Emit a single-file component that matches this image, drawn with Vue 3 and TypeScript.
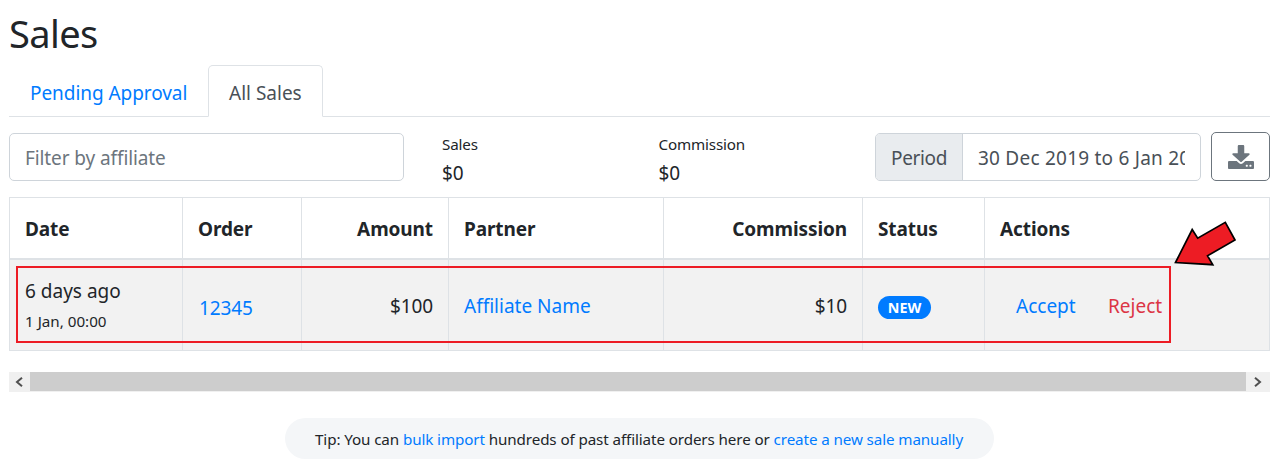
<script setup lang="ts">
import { ref } from 'vue'

const activeTab = ref('All Sales')
const tabs = ['Pending Approval', 'All Sales']
const filter = ref('')
const period = '30 Dec 2019 to 6 Jan 2020'
const stats = [
  { label: 'Sales', value: '$0' },
  { label: 'Commission', value: '$0' },
]
</script>

<template>
  <main class="page">
    <h1 class="title">Sales</h1>

    <nav class="tabs">
      <a
        v-for="tab in tabs"
        :key="tab"
        class="tab"
        :class="{ active: tab === activeTab }"
        @click="activeTab = tab"
      >{{ tab }}</a>
    </nav>

    <section class="toolbar">
      <input v-model="filter" class="filter" type="text" placeholder="Filter by affiliate" />
      <div v-for="stat in stats" :key="stat.label" class="stat">
        <div class="stat-label">{{ stat.label }}</div>
        <div class="stat-value">{{ stat.value }}</div>
      </div>
      <div class="period">
        <span class="period-label">Period</span>
        <div class="period-value"><span>{{ period }}</span></div>
      </div>
      <button class="download" aria-label="Download">
        <svg viewBox="0 0 512 512" preserveAspectRatio="none" width="26" height="24">
          <path fill="currentColor" d="M216 0h80c13.3 0 24 10.7 24 24v152h87.7c17.8 0 26.7 21.5 14.1 34.1L269.7 358.3c-7.5 7.5-19.8 7.5-27.3 0L90.1 210.1c-12.6-12.6-3.7-34.1 14.1-34.1H192V24c0-13.3 10.7-24 24-24zm296 366v122c0 13.3-10.7 24-24 24H24c-13.3 0-24-10.7-24-24V366c0-13.3 10.7-24 24-24h146.7l49 49c20.1 20.1 52.5 20.1 72.6 0l49-49H488c13.3 0 24 10.7 24 24zm-120 76c0-13-10-23-22-23s-22 10-22 23 10 23 22 23 22-10 22-23zm72 0c0-13-10-23-22-23s-22 10-22 23 10 23 22 23 22-10 22-23z" />
        </svg>
      </button>
    </section>

    <section class="table-wrap">
      <div class="row head">
        <div class="cell">Date</div>
        <div class="cell">Order</div>
        <div class="cell right">Amount</div>
        <div class="cell">Partner</div>
        <div class="cell right">Commission</div>
        <div class="cell">Status</div>
        <div class="cell">Actions</div>
      </div>
      <div class="row body">
        <div class="cell date">
          <span class="ago">6 days ago</span>
          <span class="exact">1 Jan, 00:00</span>
        </div>
        <div class="cell"><a class="order">12345</a></div>
        <div class="cell right"><span>$100</span></div>
        <div class="cell"><a class="partner">Affiliate Name</a></div>
        <div class="cell right"><span>$10</span></div>
        <div class="cell"><span class="badge">NEW</span></div>
        <div class="cell actions">
          <a class="accept">Accept</a>
          <a class="reject">Reject</a>
        </div>
      </div>
      <div class="highlight"></div>
      <svg class="arrow" viewBox="0 0 66 50" width="66" height="50">
        <path d="M4.5 43.5L21.2 10.5L26.7 19.2L54.3 3.3L64 21L36.5 36.8L41.8 45.7Z" fill="#ed1c24" stroke="#000" stroke-width="1.7" />
      </svg>
    </section>

    <div class="scrollbar">
      <span class="scroll-end">
        <svg width="8" height="10" viewBox="0 0 8 10"><path d="M7 0.8L2 5L7 9.2" /></svg>
      </span>
      <span class="thumb"></span>
      <span class="scroll-end last">
        <svg width="8" height="10" viewBox="0 0 8 10"><path d="M1 0.8L6 5L1 9.2" /></svg>
      </span>
    </div>

    <div class="tip">
      <p>Tip: You can <a>bulk import</a> hundreds of past affiliate orders here or <a>create a new sale manually</a></p>
    </div>
  </main>
</template>

<style>
body {
  margin: 0;
  background: #fff;
}
</style>

<style scoped>
* {
  box-sizing: border-box;
}
.page {
  width: 1278px;
  height: 467px;
  padding: 0 8px 0 9px;
  overflow: hidden;
  color: #212529;
  font: 19px/30px "Noto Sans", "Open Sans", sans-serif;
  white-space: nowrap;
}
a {
  color: #007bff;
  cursor: pointer;
}
.title {
  margin: 0;
  height: 65px;
  padding-top: 10px;
  font-size: 38px;
  line-height: 47px;
  font-weight: 400;
  letter-spacing: -0.6px;
}
.tabs {
  display: flex;
  height: 52px;
  border-bottom: 1px solid #dee2e6;
}
.tab {
  height: 52px;
  padding: 12px 20px;
  border: 1px solid transparent;
  border-radius: 5px 5px 0 0;
}
.tab:first-child {
  width: 199px;
  letter-spacing: -0.06px;
}
.tab:last-child {
  width: 115px;
}
.tab.active {
  color: #495057;
  background: #fff;
  border-color: #dee2e6 #dee2e6 #fff;
}
.toolbar {
  display: flex;
  height: 80px;
  padding-top: 16px;
}
.filter {
  width: 395px;
  height: 48px;
  margin-right: 38px;
  padding: 2px 15px 0;
  border: 1px solid #ced4da;
  border-radius: 5px;
  color: #495057;
  font: inherit;
  letter-spacing: -0.1px;
  outline: 0;
}
.filter::placeholder {
  color: #6c757d;
  opacity: 1;
}
.stat {
  width: 216.5px;
}
.stat-label {
  height: 24px;
  font-size: 15.2px;
  line-height: 23px;
  letter-spacing: -0.16px;
}
.stat-value {
  line-height: 32px;
  letter-spacing: -0.2px;
}
.period {
  display: flex;
  width: 326px;
  height: 48px;
  border: 1px solid #ced4da;
  border-radius: 5px;
  color: #495057;
  line-height: 48px;
  overflow: hidden;
}
.period-label {
  width: 87px;
  padding-left: 15px;
  background: #e9ecef;
  border-right: 1px solid #ced4da;
  letter-spacing: -0.35px;
}
.period-value {
  flex: 1;
  padding: 0 15px;
  min-width: 0;
  letter-spacing: 0.23px;
}
.period-value span {
  display: block;
  overflow: hidden;
}
.download {
  display: flex;
  align-items: center;
  justify-content: center;
  width: 59px;
  height: 49px;
  margin: -1px 0 0 10px;
  padding: 0;
  background: #fff;
  border: 1px solid #6c757d;
  border-radius: 5px;
  color: #6c757d;
}
.table-wrap {
  position: relative;
  height: 154px;
}
.row {
  display: grid;
  grid-template-columns: 173px 119px 147px 215px 199px 122px 286px;
}
.cell {
  display: flex;
  align-items: center;
  padding: 0 15px;
  border-left: 1px solid #dee2e6;
}
.cell:last-child {
  border-right: 1px solid #dee2e6;
}
.cell.right {
  justify-content: flex-end;
}
.head {
  height: 63px;
  border-top: 1px solid #dee2e6;
  border-bottom: 2px solid #dee2e6;
  font-weight: 700;
  letter-spacing: -0.1px;
}
.head .cell {
  padding-top: 2px;
}
.body {
  height: 91px;
  background: #f2f2f2;
  border-bottom: 1px solid #dee2e6;
}
.body .cell {
  padding-top: 2px;
}
.body .date {
  flex-direction: column;
  align-items: flex-start;
  justify-content: center;
}
.exact {
  font-size: 15.2px;
}
.order {
  padding: 4px 0 0 1px;
  letter-spacing: -0.1px;
}
.right span {
  letter-spacing: -0.1px;
}
.badge {
  width: 53px;
  height: 23px;
  margin-top: 2px;
  border-radius: 12px;
  background: #007bff;
  color: #fff;
  font-size: 14.3px;
  font-weight: 700;
  line-height: 23px;
  text-align: center;
}
.accept {
  width: 92px;
  margin-left: 16px;
}
.reject {
  color: #dc3545;
}
.highlight {
  position: absolute;
  left: 7px;
  top: 69px;
  width: 1155px;
  height: 77px;
  border: 2px solid #ed1c24;
}
.arrow {
  position: absolute;
  left: 1162px;
  top: 22px;
}
.scrollbar {
  display: flex;
  height: 20px;
  margin-top: 21px;
  background: #f0f0f0;
}
.scroll-end {
  display: flex;
  align-items: center;
  justify-content: center;
  width: 21px;
  height: 19px;
}
.scroll-end:first-child {
  padding-right: 2px;
}
.scroll-end.last {
  width: 24px;
}
.scroll-end path {
  fill: none;
  stroke: #505050;
  stroke-width: 2;
}
.thumb {
  flex: 1;
  height: 19px;
  background: #cdcdcd;
}
.tip {
  width: 709px;
  height: 41px;
  margin: 26px 0 0 276px;
  border-radius: 21px;
  background: #f4f6f8;
}
.tip p {
  margin: 0;
  padding-left: 30px;
  font-size: 15.2px;
  line-height: 43px;
  letter-spacing: -0.103px;
}
</style>
